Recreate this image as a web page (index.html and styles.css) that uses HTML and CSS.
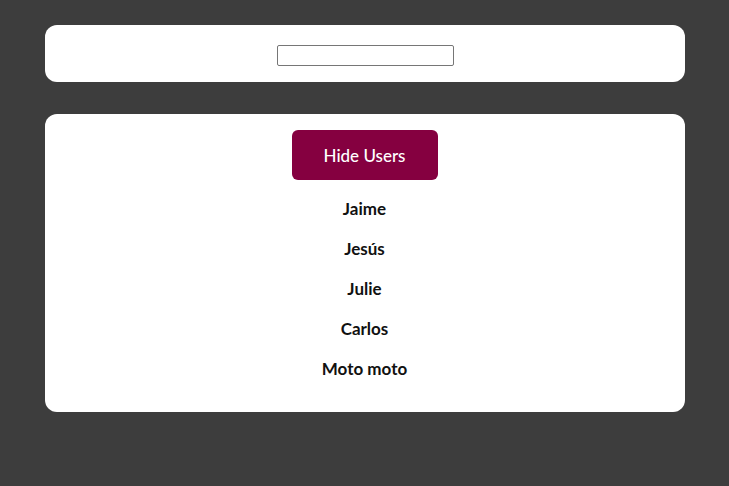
FILE: index.html
```html
<!DOCTYPE html>
<html>
<head>
<meta charset="utf-8">
<link rel="stylesheet" href="styles.css">
</head>
<body>
<main class="page">
  <section class="card search-card">
    <input class="search" type="text">
  </section>
  <section class="card users-card">
    <button class="toggle">Hide Users</button>
    <ul class="users">
      <li>Jaime</li>
      <li>Jesús</li>
      <li>Julie</li>
      <li>Carlos</li>
      <li>Moto moto</li>
    </ul>
  </section>
</main>
</body>
</html>
```
FILE: styles.css
```css
html, body {
  margin: 0;
  padding: 0;
  background: #3d3d3d;
  font-family: "Source Sans Pro", "Lato", "Open Sans", sans-serif;
}
.page {
  width: 640px;
  margin: 0 auto;
  padding-top: 25px;
  display: flex;
  flex-direction: column;
  gap: 32px;
}
.card {
  background: #ffffff;
  border-radius: 12px;
  display: flex;
  flex-direction: column;
  align-items: center;
}
.search-card {
  height: 57px;
  padding-top: 20px;
  box-sizing: border-box;
}
.search {
  width: 177px;
  height: 21px;
  box-sizing: border-box;
  border: 1px solid #767676;
  border-radius: 2px;
  padding: 1px 2px;
  margin: 0 0 0 2px;
  background: #fff;
}
.users-card {
  padding: 16px 0 23px;
}
.toggle {
  width: 146px;
  height: 50px;
  background: #850040;
  color: #ffffff;
  border: none;
  border-radius: 6px;
  font-family: inherit;
  font-size: 17px;
  font-weight: 500;
  padding: 0;
  margin-bottom: 9px;
}
.users {
  list-style: none;
  margin: 0;
  padding: 0;
  text-align: center;
}
.users li {
  line-height: 40px;
  font-size: 17px;
  font-weight: bold;
  color: #111;
}
```
